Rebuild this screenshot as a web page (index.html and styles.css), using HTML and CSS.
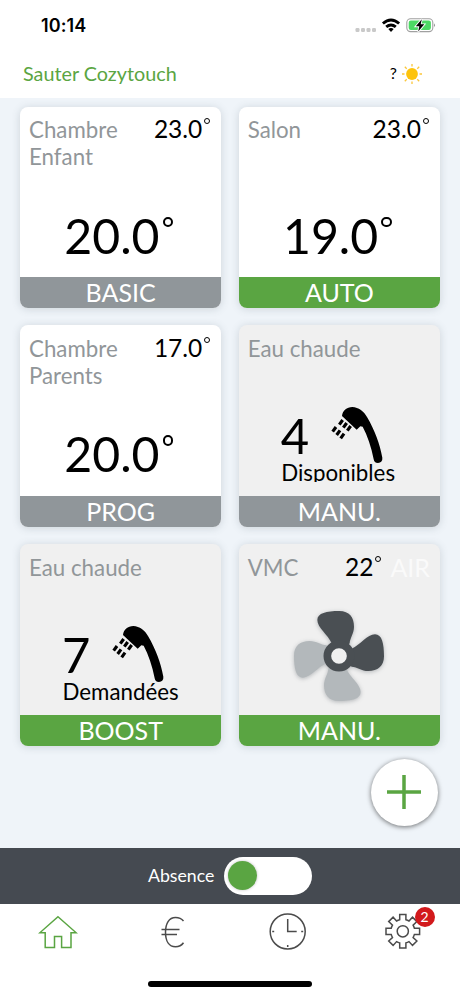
FILE: index.html
```html
<!DOCTYPE html>
<html lang="fr">
<head>
<meta charset="utf-8">
<title>Sauter Cozytouch</title>
<link rel="stylesheet" href="styles.css">
</head>
<body>
<svg class="defs" width="0" height="0">
  <symbol id="shower" viewBox="300 255 165 180">
    <path d="M336 288C338 272 350 261 367 261C386 262 402 274 411 291C435 332 449 371 457 413C458 423 453 428 444 429C436 429 432 425 431 418C424 380 412 347 398 320L391 319L380 329Z"/>
    <path d="M338 300L328 314M350 309L340 323M362 318L352 332M318 321L308 335M330 331L320 345M342 341L332 355" stroke="#000" stroke-width="9.500"/>
  </symbol>
</svg>
<div class="phone">
  <div class="status">
    <span class="clock">10:14</span>
    <svg class="signals" width="82" height="20" viewBox="354 16 82 20">
      <g fill="#c9c9c9"><rect x="355.5" y="28" width="4" height="4" rx="1.2"/><rect x="361" y="28" width="4" height="4" rx="1.2"/><rect x="366.500" y="28" width="4" height="4" rx="1.2"/><rect x="372" y="28" width="4" height="4" rx="1.2"/></g>
      <g fill="none" stroke="#000" stroke-width="2.900"><path d="M382.900 23.500Q391 16.500 399.100 23.500"/><path d="M386.200 26.900Q391 22.900 395.800 26.900"/></g>
      <path d="M388.300 29Q391 27.200 393.700 29L391 31.900Z"/>
      <rect x="406.800" y="18.800" width="26" height="12.800" rx="3.800" fill="#fff" stroke="#a0a0a0" stroke-width="1.100"/>
      <rect x="408.700" y="20.500" width="22.200" height="9.400" rx="2.200" fill="#4cd964"/>
      <path d="M434.200 23.300Q436 25.200 434.200 27.200Z" fill="#777"/>
      <path d="M421.800 19.200L415.800 26.300H419.300L418.200 31.600L424.300 24.300H420.700Z" stroke="#fff" stroke-width="1.800" paint-order="stroke"/>
    </svg>
  </div>
  <header class="header">
    <h1>Sauter Cozytouch</h1>
    <div class="weather"><span>?</span>
      <svg width="22" height="22" viewBox="-11 -11 22 22"><circle r="5.900" fill="#fdc30b"/><path d="M0-7.500V-10M0 7.500V10M-7.500 0H-10M7.500 0H10M-5.300-5.300L-7.200-7.200M5.300-5.300L7.200-7.200M-5.300 5.300L-7.200 7.200M5.300 5.300L7.200 7.200" stroke="#fbc63a" stroke-width="1.300"/></svg>
    </div>
  </header>
  <main class="board">
    <section class="card">
      <div class="top"><h2>Chambre<br>Enfant</h2><span class="ambient">23.0<i></i></span></div>
      <div class="target">20.0<i></i></div>
      <div class="mode">BASIC</div>
    </section>
    <section class="card">
      <div class="top"><h2>Salon</h2><span class="ambient">23.0<i></i></span></div>
      <div class="target">19.0<i></i></div>
      <div class="mode on">AUTO</div>
    </section>
    <section class="card">
      <div class="top"><h2>Chambre<br>Parents</h2><span class="ambient">17.0<i></i></span></div>
      <div class="target">20.0<i></i></div>
      <div class="mode">PROG</div>
    </section>
    <section class="card muted">
      <div class="top"><h2>Eau chaude</h2></div>
      <div class="water"><div class="count"><span>4</span><svg width="55" height="60"><use href="#shower"/></svg></div><p>Disponibles</p></div>
      <div class="mode">MANU.</div>
    </section>
    <section class="card muted">
      <div class="top"><h2>Eau chaude</h2></div>
      <div class="water"><div class="count"><span>7</span><svg width="55" height="60"><use href="#shower"/></svg></div><p>Demandées</p></div>
      <div class="mode on">BOOST</div>
    </section>
    <section class="card muted">
      <div class="top"><h2>VMC</h2><span class="ambient">22<i></i></span><span class="air">AIR</span></div>
      <div class="fan">
        <svg width="100" height="100" viewBox="175 201 300 300">
          <defs><path id="blade" d="M303 313C292 287 260 266 260 243C260 222 288 216 326 216C356 216 370 235 370 263C370 284 358 296 357 313L325 351Z"/></defs>
          <g fill="#b3b8bb"><use href="#blade" transform="rotate(180 325 351)"/><use href="#blade" transform="rotate(270 325 351)"/></g>
          <g fill="#4a4f53"><use href="#blade"/><use href="#blade" transform="rotate(90 325 351)"/></g>
          <circle cx="325" cy="351" r="35" fill="#f0f0f0" stroke="#4a4f53" stroke-width="23"/>
        </svg>
      </div>
      <div class="mode on">MANU.</div>
    </section>
    <button class="add" aria-label="Ajouter"><svg width="34" height="34" viewBox="0 0 34 34"><path d="M17 0V34M0 17H34" stroke="#5aa542" stroke-width="3.500"/></svg></button>
  </main>
  <div class="absence"><span>Absence</span><div class="switch"><div class="knob"></div></div></div>
  <nav class="tabs">
    <div class="tab"><svg class="active" width="40" height="34" viewBox="38 914 40 34"><path d="M58 915.800L76.200 931.800H71V946.500H61.600V935.500H54.500V946.500H45.200V931.800H39.800Z"/></svg></div>
    <div class="tab"><svg width="30" height="34" viewBox="158 914 30 34"><path d="M183.500 920C181.500 917.500 178.500 916.500 175.500 916.500C169 916.500 165.500 922.500 165.500 931.200C165.500 940 169 945.700 175.500 945.700C178.500 945.700 181.500 944.500 183.500 941.700M161.500 928.500H179.500M161.500 933.500H177"/></svg></div>
    <div class="tab"><svg width="40" height="40" viewBox="-19.700 -19.500 40 40"><circle r="17.500"/><path d="M0-12.500V0H9M-15.500 0H-13.500M13.500 0H15.500M0 13.500V15.500"/></svg></div>
    <div class="tab"><svg width="40" height="40" viewBox="-19.800 -19.300 40 40"><path d="M-3.100-16.800H3.100V-11.600Q4.800-11.100 6.200-10.300L9.700-14.100L14.100-9.700L10.300-6.200Q11.100-4.800 11.600-3.100H16.800V3.100H11.600Q11.100 4.800 10.300 6.200L14.100 9.700L9.700 14.100L6.200 10.300Q4.800 11.100 3.100 11.600V16.800H-3.100V11.600Q-4.800 11.100-6.200 10.300L-9.700 14.100L-14.100 9.700L-10.300 6.200Q-11.100 4.800-11.600 3.100H-16.800V-3.100H-11.600Q-11.100-4.800-10.300-6.200L-14.100-9.700L-9.700-14.100L-6.200-10.300Q-4.800-11.100-3.100-11.600Z"/><circle r="5.600"/></svg><span class="badge">2</span></div>
  </nav>
  <div class="home-indicator"></div>
</div>
</body>
</html>
```
FILE: styles.css
```css
* { box-sizing: border-box; }
body { margin: 0; background: #fff; font-family: Lato, sans-serif; color: #000; }
h1, h2, p { margin: 0; font-weight: 400; }
svg { display: block; flex: none; }
.defs { position: absolute; }
.phone { width: 460px; height: 996px; display: flex; flex-direction: column; overflow: hidden; }
.status { height: 52px; display: flex; justify-content: space-between; padding: 16px 24px 0 41px; }
.clock { font: 600 18px/20px Inter, sans-serif; letter-spacing: .1px; }
.header { height: 46px; display: flex; justify-content: space-between; align-items: center; padding: 0 37px 2px 23px; }
h1 { font-size: 19.800px; line-height: 24px; margin-top: -2px; color: #5aa542; }
.weather { display: flex; align-items: center; gap: 4px; font-size: 16px; line-height: 18px; }
.weather span { margin-top: -2px; }
.board { position: relative; height: 750px; background: #eff4f9; padding: 8.700px 19.900px 0 20px; display: grid; grid-template-columns: 201.300px 201.300px; grid-auto-rows: 201.400px; gap: 17.400px; }
.card { background: #fff; border-radius: 8px; box-shadow: 0 1px 9px rgba(70, 85, 95, .2); overflow: hidden; display: flex; flex-direction: column; }
.muted { background: #f0f0f0; }
.top { height: 88px; padding: 9.600px 10px 0 9px; display: flex; flex: none; }
h2 { font-size: 22.300px; line-height: 27px; color: #919699; flex: 1; white-space: nowrap; }
.ambient { display: flex; font-size: 24.500px; line-height: 25px; margin-right: 1px; }
.ambient i { width: 6px; height: 6px; border: 1.300px solid #000; border-radius: 50%; margin: 2px 0 0 2px; }
.air { color: #fafafa; font-size: 25px; line-height: 26px; margin-left: 8px; }
.target { height: 82px; flex: none; display: flex; justify-content: center; font-size: 48.200px; line-height: 80px; padding-right: 4px; }
.target i { width: 10.500px; height: 10.500px; border: 2px solid #000; border-radius: 50%; margin: 22px 0 0 3px; }
.mode { margin-top: auto; height: 31px; flex: none; background: #90969a; color: #fff; font-size: 25px; line-height: 31px; text-align: center; }
.mode.on { background: #5aa542; }
.water { margin-top: -8px; padding-left: 42px; }
.count { height: 60px; display: flex; gap: 20px; }
.count span { width: 29px; font-size: 49px; line-height: 60px; }
.water p { font-size: 22.300px; line-height: 18px; height: 18px; margin-top: -1px; padding-left: .5px; overflow: hidden; }
.fan { margin-top: -26px; display: flex; justify-content: center; }
.fan svg { filter: drop-shadow(0 1px 2px rgba(40, 50, 60, .3)); }
.add { position: absolute; left: 370.500px; top: 660.700px; width: 67px; height: 67px; padding: 0; border: 0; border-radius: 50%; background: #fff; display: flex; align-items: center; justify-content: center; box-shadow: 0 1px 5px rgba(0, 0, 0, .55); }
.absence { height: 55.500px; background: #454a51; display: flex; align-items: center; padding-left: 148px; color: #fff; font-size: 17.700px; }
.absence span { width: 76px; }
.switch { width: 88px; height: 38px; border-radius: 19px; background: #fff; padding: 4.500px 4px; }
.knob { width: 29px; height: 29px; border-radius: 50%; background: #5aa542; box-shadow: 0 0 3px rgba(0, 0, 0, .25); }
.tabs { height: 77px; display: grid; grid-template-columns: repeat(4, 115px); padding-top: 8px; }
.tab { position: relative; height: 40px; display: flex; align-items: center; justify-content: center; }
.tab svg { fill: none; stroke: #4b4b4b; stroke-width: 1.500; }
.tab svg.active { stroke: #5aa542; }
.badge { position: absolute; left: 69.500px; top: -5px; width: 20px; height: 20px; border-radius: 50%; background: #d2191c; color: #fff; font-size: 14px; line-height: 20px; text-align: center; }
.home-indicator { width: 164px; height: 6px; border-radius: 3px; background: #000; margin: 0 auto; }
```
